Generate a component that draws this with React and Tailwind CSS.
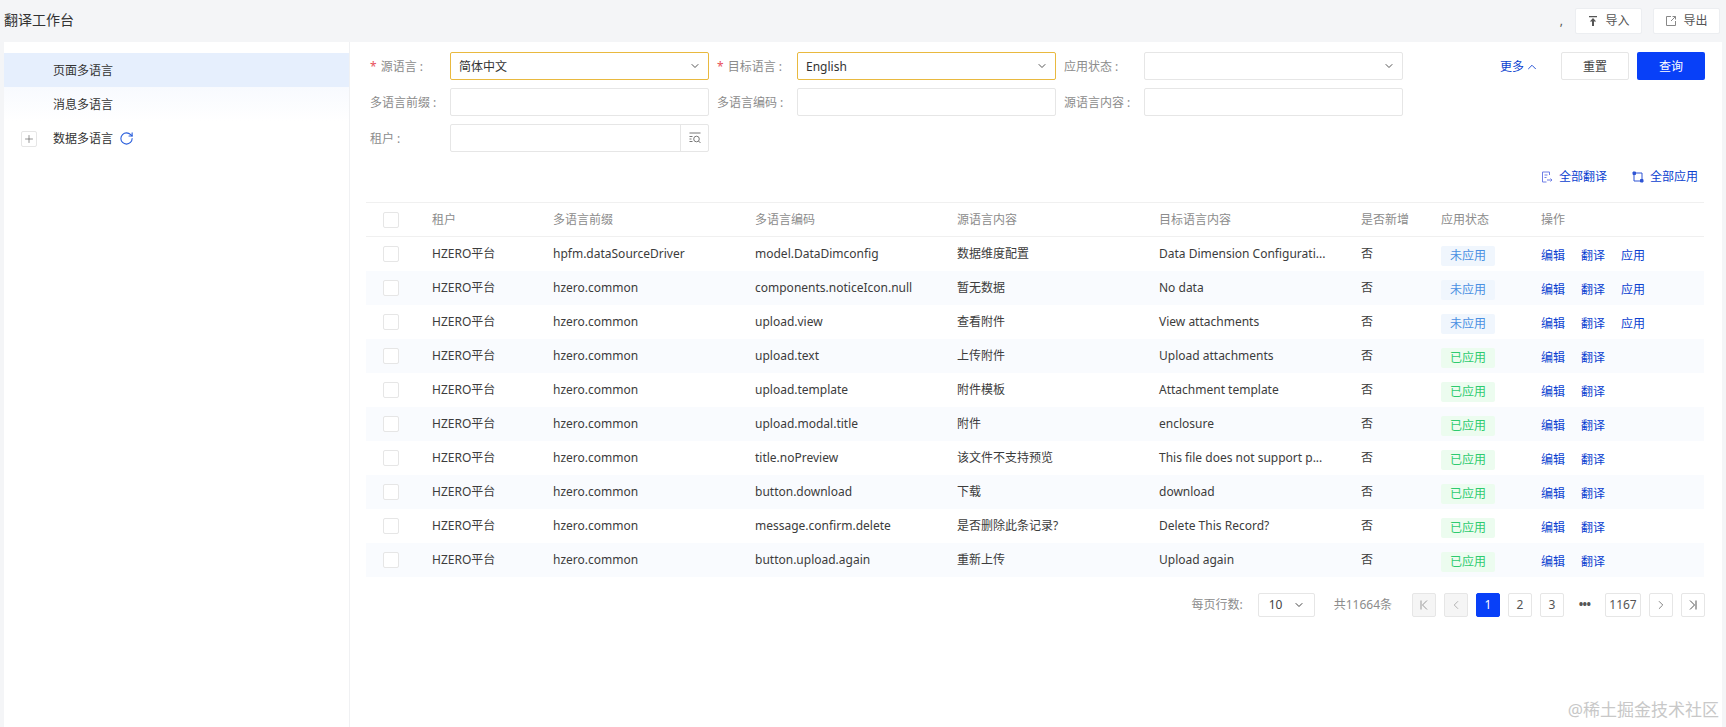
import React from 'react';
import { ChevronDown, ChevronUp, ChevronLeft, ChevronRight, Plus, RotateCw } from 'lucide-react';

const rows = [
  ['hpfm.dataSourceDriver', 'model.DataDimconfig', '数据维度配置', 'Data Dimension Configurati...', false],
  ['hzero.common', 'components.noticeIcon.null', '暂无数据', 'No data', false],
  ['hzero.common', 'upload.view', '查看附件', 'View attachments', false],
  ['hzero.common', 'upload.text', '上传附件', 'Upload attachments', true],
  ['hzero.common', 'upload.template', '附件模板', 'Attachment template', true],
  ['hzero.common', 'upload.modal.title', '附件', 'enclosure', true],
  ['hzero.common', 'title.noPreview', '该文件不支持预览', 'This file does not support p...', true],
  ['hzero.common', 'button.download', '下载', 'download', true],
  ['hzero.common', 'message.confirm.delete', '是否删除此条记录?', 'Delete This Record?', true],
  ['hzero.common', 'button.upload.again', '重新上传', 'Upload again', true],
];

const gridCols = 'grid grid-cols-[66px_121px_202px_202px_202px_202px_80px_100px_1fr] items-center';

const Field = ({ label, required, children }) => (
  <div className="flex items-center w-[347px]">
    <label className="w-[80px] shrink-0 pt-px text-xs text-[#8c8c8c] whitespace-nowrap">
      {required && <span className="text-[#e8505b] mr-1">*</span>}
      {label}
    </label>
    <div className="w-[259px]">{children}</div>
  </div>
);

const Input = ({ active, value, select, lookup }) => (
  <div className={`h-7 flex items-center rounded-[2px] border bg-white text-xs text-[#333] ${active ? 'border-[#e9b93f]' : 'border-[#e6e6e6]'}`}>
    <span className="flex-1 pl-[8px] pt-px">{value}</span>
    {select && <ChevronDown className="w-3 h-3 mr-[7px] text-[#555]" />}
    {lookup && (
      <span className="w-[28px] h-full flex items-center justify-center border-l border-[#e6e6e6]">
        <svg viewBox="0 0 14 14" className="w-[14px] h-[14px] text-[#777]" fill="none" stroke="currentColor" strokeWidth="1">
          <path d="M1.500 2h11M1.500 5.500h3M1.500 8h2M1.500 10.500h3" />
          <circle cx="8.500" cy="8" r="2.800" />
          <path d="M10.500 10l2 2" />
        </svg>
      </span>
    )}
  </div>
);

const TopButton = ({ icon, children }) => (
  <button className="h-[26px] w-[67px] flex items-center justify-center gap-[6px] bg-white rounded-[2px] border border-[#eceef1] text-xs text-[#555]">
    {icon}
    {children}
  </button>
);

const PageBtn = ({ children, active, disabled, wide }) => (
  <span className={`h-6 ${wide ? 'w-9' : 'w-6'} flex items-center justify-center rounded-[2px] border text-xs ${active ? 'bg-[#0840f8] border-[#0840f8] text-white' : disabled ? 'bg-[#f5f5f5] border-[#e6e6e6] text-[#999]' : 'bg-white border-[#e6e6e6] text-[#555]'}`}>
    {children}
  </span>
);

const Checkbox = () => <span className="block w-4 h-4 ml-[17px] rounded-[2px] border border-[#e6e6e6] bg-white" />;

const App = () => (
  <div className="relative h-[727px] w-full overflow-hidden bg-[#f4f5f7] font-['Noto_Sans','Noto_Sans_CJK_SC',sans-serif]">
    {/* Header */}
    <header className="h-[42px] flex items-center justify-between pl-1 pr-[6px]">
      <h1 className="pb-[2px] text-sm font-normal text-[#333]">翻译工作台</h1>
      <div className="flex items-center">
        <span className="text-xs text-[#555] mr-3">,</span>
        <TopButton icon={
          <svg viewBox="0 0 12 12" className="w-3 h-3 text-[#555]" fill="currentColor"><path d="M2 1h8v1.200H2zM6 3l3.200 3.600H7V11H5V6.600H2.800z" /></svg>
        }>导入</TopButton>
        <span className="w-[11px]" />
        <TopButton icon={
          <svg viewBox="0 0 12 12" className="w-3 h-3 text-[#888]" fill="none" stroke="currentColor"><path d="M6 1.500H1.500v9h9V6M6 6l4.500-4.500M7.500 1.500h3v3" /></svg>
        }>导出</TopButton>
      </div>
    </header>

    <div className="flex h-[685px] mx-1 bg-white">
      {/* Sidebar */}
      <aside className="w-[346px] shrink-0 pt-[11px] border-r border-[#f0f1f3] text-xs text-[#333]">
        <div className="h-[34px] flex items-center pl-[49px] pt-px bg-[#e6effd]">页面多语言</div>
        <div className="h-[34px] flex items-center pl-[49px] pt-px bg-gradient-to-b from-[#f8fafe] to-white">消息多语言</div>
        <div className="h-[34px] flex items-center pl-[17px] pt-px">
          <span className="w-4 h-4 flex items-center justify-center border border-[#e6e6e6] rounded-[2px] mr-4">
            <Plus className="w-3 h-3 text-[#555]" strokeWidth={1.25} />
          </span>
          数据多语言
          <RotateCw className="w-[15px] h-[15px] ml-[6px] text-[#2a5fdc]" strokeWidth={1.75} />
        </div>
      </aside>

      {/* Main */}
      <main className="flex-1 pl-[16px] pr-[17px] min-w-0">
        <div className="flex pt-[10px] pl-[4px]">
          <div className="flex flex-col gap-2 w-[1041px] shrink-0">
            <div className="flex">
              <Field label="源语言 :" required><Input active value="简体中文" select /></Field>
              <Field label="目标语言 :" required><Input active value="English" select /></Field>
              <Field label="应用状态 :"><Input select /></Field>
            </div>
            <div className="flex">
              <Field label="多语言前缀 :"><Input /></Field>
              <Field label="多语言编码 :"><Input /></Field>
              <Field label="源语言内容 :"><Input /></Field>
            </div>
            <div className="flex">
              <Field label="租户 :"><Input lookup /></Field>
            </div>
          </div>
          <div className="flex items-start flex-1 pl-[89px]">
            <span className="h-7 shrink-0 flex items-center whitespace-nowrap pt-px text-xs text-[#0b3fd0]">更多<ChevronUp className="w-[14px] h-[14px] ml-px" strokeWidth={1.5} /></span>
            <button className="ml-[22px] shrink-0 w-[68px] h-7 pt-px rounded-[2px] border border-[#e6e6e6] text-xs text-[#444]">重置</button>
            <button className="ml-2 shrink-0 w-[68px] h-7 pt-px rounded-[2px] bg-[#0840f8] text-xs text-white">查询</button>
          </div>
        </div>

        {/* Table actions */}
        <div className="h-[50px] flex items-center justify-end gap-[25px] pr-[7px] text-xs text-[#0b3fd0]">
          <span className="flex items-center gap-[6px]">
            <svg viewBox="0 0 12 12" className="w-3 h-3 text-[#6f7fe6]" fill="none" stroke="currentColor"><path d="M8.500 4V1H1.500v10h4M3.500 4h3M3.500 6.500h2M6 9h5M9.500 7.500L11 9l-1.500 1.500" /></svg>
            全部翻译
          </span>
          <span className="flex items-center gap-[6px]">
            <svg viewBox="0 0 12 12" className="w-3 h-3 text-[#2f55d4]" fill="none" stroke="currentColor"><path d="M3 2h7v6M9 10H2V4" /><path d="M1 1h2.500v2.500H1zM8.500 8.500H11V11H8.500z" fill="currentColor" /></svg>
            全部应用
          </span>
        </div>

        {/* Table */}
        <div className="mr-px border-t border-[#f0f0f0]">
          <div className={`${gridCols} h-[34px] border-b border-[#f0f0f0] text-xs text-[#8c8c8c]`}>
            <div><Checkbox /></div>
            <div>租户</div>
            <div>多语言前缀</div>
            <div>多语言编码</div>
            <div>源语言内容</div>
            <div>目标语言内容</div>
            <div>是否新增</div>
            <div>应用状态</div>
            <div>操作</div>
          </div>
          {rows.map((r, i) => (
            <div key={i} className={`${gridCols} h-[34px] text-xs text-[#3c3c3c] ${i % 2 === 1 ? 'bg-[#f9fbfe]' : 'bg-white'}`}>
              <div><Checkbox /></div>
              <div className="whitespace-nowrap">HZERO平台</div>
              <div className="whitespace-nowrap">{r[0]}</div>
              <div className="whitespace-nowrap">{r[1]}</div>
              <div className="whitespace-nowrap">{r[2]}</div>
              <div className="whitespace-nowrap">{r[3]}</div>
              <div>否</div>
              <div>
                <span className={`mt-[3px] w-[54px] h-5 flex items-center justify-center rounded-[2px] ${r[4] ? 'bg-[#ecfcef] text-[#2ecb6f]' : 'bg-[#f0f6fd] text-[#4a90e2]'}`}>
                  {r[4] ? '已应用' : '未应用'}
                </span>
              </div>
              <div className="flex gap-4 mt-[3px] text-[#0b3fd0]">
                <span>编辑</span>
                <span>翻译</span>
                {!r[4] && <span>应用</span>}
              </div>
            </div>
          ))}
        </div>

        {/* Pagination */}
        <div className="mt-4 flex items-center justify-end text-xs text-[#8c8c8c]">
          <span className="mr-[15px]">每页行数:</span>
          <span className="w-[57px] h-6 flex items-center justify-between pl-[10px] pr-[9px] rounded-[2px] border border-[#e6e6e6] text-[#444]">
            10<ChevronDown className="w-3 h-3" />
          </span>
          <span className="ml-[19px] mr-5">共11664条</span>
          <div className="flex items-center gap-2">
            <PageBtn disabled>
              <svg viewBox="0 0 12 12" className="w-3 h-3" fill="none" stroke="currentColor"><path d="M3 1.500v9M9 1.500L4.500 6 9 10.500" /></svg>
            </PageBtn>
            <PageBtn disabled><ChevronLeft className="w-[14px] h-[14px]" strokeWidth={1.25} /></PageBtn>
            <PageBtn active>1</PageBtn>
            <PageBtn>2</PageBtn>
            <PageBtn>3</PageBtn>
            <span className="w-[25px] text-center text-[#555] font-bold tracking-tighter">•••</span>
            <PageBtn wide>1167</PageBtn>
            <PageBtn><ChevronRight className="w-[14px] h-[14px]" strokeWidth={1.25} /></PageBtn>
            <PageBtn>
              <svg viewBox="0 0 12 12" className="w-3 h-3" fill="none" stroke="currentColor"><path d="M9 1.500v9M3 1.500L7.500 6 3 10.500" /></svg>
            </PageBtn>
          </div>
        </div>
      </main>
    </div>

    <span className="absolute right-[7px] bottom-[5px] text-[17px] leading-6 text-[#c8c8c8]">@稀土掘金技术社区</span>
  </div>
);

export default App;
